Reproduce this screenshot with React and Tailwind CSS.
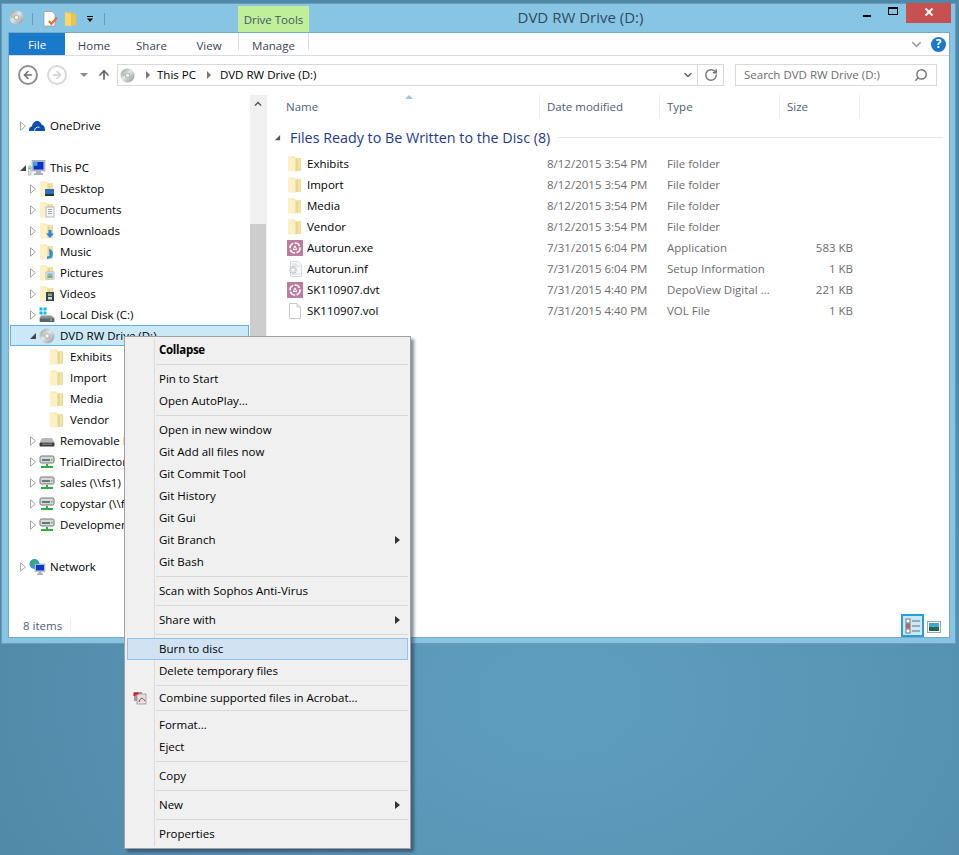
import { ChevronDown, Search, RotateCw, ArrowUp, ArrowLeft, ArrowRight } from 'lucide-react';

const TREE = [
	{ label: 'OneDrive', level: 0, icon: 'cloud', exp: 'closed' },
	{ blank: true },
	{ label: 'This PC', level: 0, icon: 'pc', exp: 'open' },
	{ label: 'Desktop', level: 1, icon: 'fDesktop', exp: 'closed' },
	{ label: 'Documents', level: 1, icon: 'fDocs', exp: 'closed' },
	{ label: 'Downloads', level: 1, icon: 'fDown', exp: 'closed' },
	{ label: 'Music', level: 1, icon: 'fMusic', exp: 'closed' },
	{ label: 'Pictures', level: 1, icon: 'fPics', exp: 'closed' },
	{ label: 'Videos', level: 1, icon: 'fVideo', exp: 'closed' },
	{ label: 'Local Disk (C:)', level: 1, icon: 'disk', exp: 'closed' },
	{ label: 'DVD RW Drive (D:)', level: 1, icon: 'disc', exp: 'open', selected: true },
	{ label: 'Exhibits', level: 2, icon: 'folder' },
	{ label: 'Import', level: 2, icon: 'folder' },
	{ label: 'Media', level: 2, icon: 'folder' },
	{ label: 'Vendor', level: 2, icon: 'folder' },
	{ label: 'Removable Disk (E:)', level: 1, icon: 'usb', exp: 'closed' },
	{ label: 'TrialDirector (\\\\fs1)', level: 1, icon: 'net', exp: 'closed' },
	{ label: 'sales (\\\\fs1)', level: 1, icon: 'net', exp: 'closed' },
	{ label: 'copystar (\\\\fs1)', level: 1, icon: 'net', exp: 'closed' },
	{ label: 'Development (\\\\fs1)', level: 1, icon: 'net', exp: 'closed' },
	{ blank: true },
	{ label: 'Network', level: 0, icon: 'globe', exp: 'closed' }
];

const FILES = [
	{ name: 'Exhibits', date: '8/12/2015 3:54 PM', type: 'File folder', size: '', icon: 'folder' },
	{ name: 'Import', date: '8/12/2015 3:54 PM', type: 'File folder', size: '', icon: 'folder' },
	{ name: 'Media', date: '8/12/2015 3:54 PM', type: 'File folder', size: '', icon: 'folder' },
	{ name: 'Vendor', date: '8/12/2015 3:54 PM', type: 'File folder', size: '', icon: 'folder' },
	{ name: 'Autorun.exe', date: '7/31/2015 6:04 PM', type: 'Application', size: '583 KB', icon: 'depo' },
	{ name: 'Autorun.inf', date: '7/31/2015 6:04 PM', type: 'Setup Information', size: '1 KB', icon: 'inf' },
	{ name: 'SK110907.dvt', date: '7/31/2015 4:40 PM', type: 'DepoView Digital ...', size: '221 KB', icon: 'depo' },
	{ name: 'SK110907.vol', date: '7/31/2015 4:40 PM', type: 'VOL File', size: '1 KB', icon: 'blank' }
];

const MENU = [
	{ label: 'Collapse', bold: true }, 'sep',
	{ label: 'Pin to Start' }, { label: 'Open AutoPlay...' }, 'sep',
	{ label: 'Open in new window' }, { label: 'Git Add all files now' }, { label: 'Git Commit Tool' }, { label: 'Git History' }, { label: 'Git Gui' }, { label: 'Git Branch', sub: true }, { label: 'Git Bash' }, 'sep',
	{ label: 'Scan with Sophos Anti-Virus' }, 'sep',
	{ label: 'Share with', sub: true }, 'sep',
	{ label: 'Burn to disc', active: true }, { label: 'Delete temporary files' }, 'short',
	{ label: 'Combine supported files in Acrobat...', acrobat: true, tight: true }, 'sep',
	{ label: 'Format...' }, { label: 'Eject' }, 'sep',
	{ label: 'Copy' }, 'sep',
	{ label: 'New', sub: true }, 'sep',
	{ label: 'Properties' }
];

const Disc = ({ className = 'w-4 h-4' }) => (
	<svg viewBox="0 0 16 16" className={ className }>
		<defs>
			<linearGradient id="discFill" x1="0" y1="0" x2="1" y2="1">
				<stop offset="0" stopColor="#8f9698" />
				<stop offset="0.45" stopColor="#e4e6e6" />
				<stop offset="1" stopColor="#8a8f92" />
			</linearGradient>
		</defs>
		<circle cx="8" cy="8" r="7.5" fill="url(#discFill)" />
		<path d="M2 5 L6 7 L5 9 L2 8Z" fill="#9fd08f" opacity="0.7" />
		<circle cx="8" cy="8" r="2.4" fill="#f4f4f4" stroke="#8b8f92" strokeWidth="0.7" />
	</svg>
);

const Folder = ({ children }) => (
	<svg viewBox="0 0 16 16" className="w-4 h-4 shrink-0">
		<path d="M1 0.5 H7 L9 2 H14 V15 H1Z" fill="#f6e6a6" />
		<path d="M1 0.5 L8.5 2.5 V15.5 H1Z" fill="#fcf1c4" />
		<path d="M8.5 2.5 L11 3.5 V14.5 L8.5 15.5Z" fill="#e6d59c" />
		<rect x="12.6" y="2" width="1.4" height="13" fill="#f1dc92" />
		{ children }
	</svg>
);

const DepoIcon = () => (
	<svg viewBox="0 0 16 16" className="w-4 h-4 shrink-0">
		<rect width="16" height="16" fill="#bd7b9d" />
		<circle cx="8" cy="8" r="5" fill="none" stroke="#fff" strokeWidth="1.6" strokeDasharray="6 1.5" />
		<path d="M6.3 9.6 L8 5.8 L9.7 9.6Z" fill="none" stroke="#fff" strokeWidth="1" />
	</svg>
);

const NetDrive = () => (
	<svg viewBox="0 0 16 16" className="w-4 h-4 shrink-0">
		<rect x="1" y="2" width="14" height="7" rx="1.5" fill="#d6d8d8" stroke="#70767a" />
		<rect x="3" y="5" width="8" height="2" fill="#6f7478" />
		<rect x="12" y="5" width="1.5" height="1.5" fill="#58c058" />
		<path d="M7 10 H9 V12 H14 V14 H2 V12 H7Z" fill="#2fae3c" />
	</svg>
);

const icons = {
	folder: <Folder />,
	fDesktop: <Folder><rect x="6" y="8" width="9" height="6" fill="#2a6fbd" /><rect x="6" y="13" width="9" height="2" fill="#26323c" /></Folder>,
	fDocs: <Folder><rect x="7" y="5" width="8" height="10" fill="#f4f6f8" stroke="#9aa4ae" strokeWidth="0.7" /><path d="M9 7.5 H13 M9 9.5 H13 M9 11.5 H13" stroke="#8a97a6" strokeWidth="0.8" /></Folder>,
	fDown: <Folder><path d="M9.5 7 H12.5 V10.5 H15 L11 15 L7 10.5 H9.5Z" fill="#2b86d8" /></Folder>,
	fMusic: <Folder><path d="M10 4.5 C14 6 15 10 12.5 14 L8 15 V12.5 L10.5 12Z" fill="#2f8fdc" /></Folder>,
	fPics: <Folder><rect x="7" y="7" width="8" height="7" fill="#eef2f4" stroke="#a0a8ae" strokeWidth="0.7" /><rect x="8.3" y="8.3" width="5.4" height="2.6" fill="#79b7d6" /><rect x="8.3" y="10.9" width="5.4" height="2" fill="#7aa66a" /></Folder>,
	fVideo: <Folder><rect x="7" y="6" width="8" height="9" fill="#3b4148" /><rect x="9" y="7.5" width="4" height="2.5" fill="#7cb36a" /><rect x="9" y="11" width="4" height="2.5" fill="#d7e0e6" /></Folder>,
	disk: (
		<svg viewBox="0 0 16 16" className="w-4 h-4 shrink-0">
			<rect x="0.5" y="0.5" width="3" height="3" fill="#17b5ef" /><rect x="4.5" y="0.5" width="3" height="3" fill="#17b5ef" />
			<rect x="0.5" y="4.5" width="3" height="3" fill="#17b5ef" /><rect x="4.5" y="4.5" width="3" height="3" fill="#17b5ef" />
			<path d="M2 8.5 H12 L15.5 11 V15 H0.5 V11Z" fill="#8b9399" />
			<rect x="1" y="11.5" width="14" height="3.5" rx="0.5" fill="#5e666c" />
			<rect x="11" y="12.5" width="2" height="1" fill="#9be05c" />
		</svg>
	),
	disc: <Disc className="w-4 h-4 shrink-0" />,
	usb: (
		<svg viewBox="0 0 16 16" className="w-4 h-4 shrink-0">
			<path d="M3 5 H13 L15.5 9.5 H0.5Z" fill="#b9b9b9" />
			<rect x="0.5" y="9.5" width="15" height="4" rx="1" fill="#3c3c3c" />
			<rect x="3" y="10.5" width="10" height="1.5" fill="#777" />
		</svg>
	),
	net: <NetDrive />,
	cloud: (
		<svg viewBox="0 0 16 16" className="w-4 h-4 shrink-0">
			<path d="M0 13 C-0.3 10.5 1 8.8 2.8 8.6 C3.4 5 5.8 3 8.2 3 C10.4 3 11.8 4.4 12.4 6.4 C14.8 6.6 16.2 9 16 13Z" fill="#0a4eb0" />
			<path d="M5.5 13 C5.5 10.2 7.5 8.6 10.5 9.2" stroke="#fff" strokeWidth="0.9" fill="none" />
		</svg>
	),
	pc: (
		<svg viewBox="0 0 16 16" className="w-4 h-4 shrink-0 overflow-visible">
			<rect x="-0.5" y="6" width="2.5" height="9" fill="#dfe5e8" stroke="#8d979d" strokeWidth="0.5" />
			<rect x="0" y="7.5" width="1.5" height="1.5" fill="#62c24c" />
			<rect x="3" y="0.5" width="13" height="10.5" fill="#c6ced4" stroke="#8a949a" strokeWidth="0.6" />
			<rect x="4.5" y="1.8" width="10" height="7.8" fill="#0d2fc4" />
			<rect x="4.5" y="1.8" width="4" height="4" fill="#3fa0ee" />
			<path d="M7 11 H12 V13 H14 V15 H5 V13 H7Z" fill="#a9b3b9" />
		</svg>
	),
	globe: (
		<svg viewBox="0 0 16 16" className="w-4 h-4 shrink-0 overflow-visible">
			<circle cx="5.5" cy="5" r="5" fill="#2e9ae0" />
			<path d="M1.5 3 L5 1 L7.5 3 L5 6 L2.5 5.5Z M6 7 L9 6.5 L8 9.5 L6 9.5Z" fill="#3fb14a" />
			<rect x="6" y="5" width="10" height="7.5" fill="#c6ced4" stroke="#8a949a" strokeWidth="0.5" />
			<rect x="7" y="6" width="8" height="5.5" fill="#1038c8" />
			<path d="M9.5 12.5 H12.5 V14.5 H14 V16 H8 V14.5 H9.5Z" fill="#a9b3b9" />
		</svg>
	),
	depo: <DepoIcon />,
	inf: (
		<svg viewBox="0 0 16 16" className="w-4 h-4 shrink-0">
			<path d="M3.5 0.5 H11 L14.5 4 V15.5 H3.5Z" fill="#fafafa" stroke="#d4d8dc" />
			<path d="M5 3 H10 M5 5 H13 M5 13 H13" stroke="#c4ced8" strokeWidth="0.8" />
			<circle cx="6" cy="9" r="3.2" fill="#e6e9eb" stroke="#b4bac0" strokeWidth="1.4" strokeDasharray="1.3 0.9" />
			<circle cx="6" cy="9" r="1" fill="#fff" />
		</svg>
	),
	blank: (
		<svg viewBox="0 0 16 16" className="w-4 h-4 shrink-0">
			<path d="M2.5 0.5 H10 L13.5 4 V15.5 H2.5Z" fill="#fff" stroke="#c8c8c8" />
			<path d="M10 0.5 V4 H13.5" fill="#f0f0f0" stroke="#c8c8c8" />
		</svg>
	)
};

const Expander = ({ state }) => {
	if (state === 'closed') return (
		<svg viewBox="0 0 8 10" className="w-2 h-2.5">
			<path d="M1.5 0.8 L6.5 5 L1.5 9.2Z" fill="#fff" stroke="#a6a6a6" />
		</svg>
	);
	if (state === 'open') return (
		<svg viewBox="0 0 8 8" className="w-2 h-2">
			<path d="M7 1 V7 H1Z" fill="#454545" />
		</svg>
	);
	return null;
};

const TreeRow = ({ row }) => {
	if (row.blank) return <div className="h-[21px]" />;

	const indent = { 0: 'pl-[9px]', 1: 'pl-[19px]', 2: 'pl-[29px]' }[row.level];

	return (
		<div className={ `flex items-center h-[21px] whitespace-nowrap text-black ${ row.selected ? 'mx-px pl-[17px] border border-[#5fb2e6] bg-[#cbe8f6]' : indent }` }>
			<span className="flex items-center justify-center w-2.5 h-full shrink-0">
				<Expander state={ row.exp } />
			</span>
			<span className="ml-px flex items-center">{ icons[row.icon] }</span>
			<span className="ml-[5px]">{ row.label }</span>
		</div>
	);
};

const ColHead = ({ width, children }) => (
	<div className={ `flex items-center h-full border-r border-[#e3eef7] pl-[7px] shrink-0 ${ width }` }>{ children }</div>
);

const FileRow = ({ file }) => (
	<div className="flex items-center h-[21px] whitespace-nowrap">
		<div className="flex items-center w-[273px] pl-[20px] shrink-0 text-black">
			{ icons[file.icon] }
			<span className="ml-[4px]">{ file.name }</span>
		</div>
		<div className="w-[120px] pl-[7px] shrink-0 text-[#6d6d6d]">{ file.date }</div>
		<div className="w-[120px] pl-[7px] shrink-0 text-[#6d6d6d]">{ file.type }</div>
		<div className="w-[73px] shrink-0 text-right text-[#6d6d6d]">{ file.size }</div>
	</div>
);

const MenuItem = ({ item }) => {
	if (item === 'sep') return <div className="flex items-center h-[7px] pl-[29px]"><div className="h-px w-full bg-[#d7d7d7]" /></div>;
	if (item === 'short') return <div className="flex items-center h-[6px] pl-[29px]"><div className="h-px w-full bg-[#d7d7d7]" /></div>;

	return (
		<div className={ `relative flex items-center ${ item.tight ? 'h-[19px]' : 'h-[22px]' } ${ item.bold ? 'font-bold tracking-[-0.3px]' : '' } ${ item.active ? 'pl-[31px] border border-[#95bfe8] bg-[#d1e2f2]' : 'pl-[32px]' }` }>
			{
				item.acrobat ?
					<svg viewBox="0 0 14 14" className="absolute left-[6px] top-[3px] w-3.5 h-3.5">
						<rect x="1" y="1" width="8" height="9" fill="#9c9c9c" />
						<rect x="4" y="3" width="9" height="10" fill="#e2e2e2" stroke="#8a8a8a" strokeWidth="0.7" />
						<path d="M0.5 1.5 H5.5 V3.5 H2.5 V5 H0.5Z" fill="#e0101a" />
						<path d="M6 11 C8 6 9 6 12 10" stroke="#e0101a" strokeWidth="1" fill="none" />
					</svg>
				:
					null
			}
			<span>{ item.label }</span>
			{
				item.sub ?
					<svg viewBox="0 0 5 8" className="absolute right-[8px] top-[7px] w-[5px] h-2"><path d="M0 0 L5 4 L0 8Z" fill="#333" /></svg>
				:
					null
			}
		</div>
	);
};

const App = () => {
	return (
		<div className="relative w-[959px] h-[855px] overflow-hidden pt-[3px] pl-px text-[11.5px] font-['Open_Sans','Noto_Sans',sans-serif] bg-[radial-gradient(ellipse_620px_420px_at_560px_700px,#5f9dbf_0%,#5a96b6_45%,#4f89a8_100%)]">

			<div className="flex flex-col w-[955px] h-[641px] border border-[#6b99b6] bg-[#88c5e4]">

				<header className="flex h-[29px] shrink-0">
					<div className="flex items-center h-full pl-[7px] gap-0 shrink-0">
						<Disc className="w-[15px] h-[15px] -mt-[2px]" />
						<span className="ml-[8px] w-px h-3 bg-[#6a9bb8]" />
						<svg viewBox="0 0 16 16" className="ml-[9px] w-4 h-4">
							<path d="M2 0.5 H10 L13 3.5 V15 H2Z" fill="#fff" stroke="#9a9a9a" strokeWidth="0.7" />
							<path d="M7 10 L9.5 13 L15 6.5" stroke="#ee6a2a" strokeWidth="2" fill="none" />
						</svg>
						<svg viewBox="0 0 14 16" className="ml-[6px] w-[13px] h-4">
							<path d="M1 0.5 H7 L8 2 H13 V15 H1Z" fill="#eec14f" />
							<path d="M1 1 L7.5 2.5 V15.5 L1 15Z" fill="#f9d76d" />
						</svg>
						<svg viewBox="0 0 8 8" className="ml-[9px] w-2 h-2"><rect x="1" y="1" width="6" height="1" fill="#000" /><path d="M1 3.5 H7 L4 7Z" fill="#000" /></svg>
						<span className="ml-[10px] w-px h-3 bg-[#6a9bb8]" />
						<div className="flex items-center justify-center self-end ml-[133px] w-[71px] h-[27px] text-[#3f5866] bg-[#c1ee9a]">Drive Tools</div>
					</div>
					<div className="flex-1 flex items-center justify-center pr-px pb-[2px] text-[15px] text-[#2e4a5e] whitespace-nowrap">DVD RW Drive (D:)</div>
					<div className="flex h-[20px] mt-[-1px] pr-[4px] shrink-0">
						<div className="flex items-center justify-center w-[27px]"><span className="block w-[8px] h-[2px] mt-[6px] bg-black" /></div>
						<div className="flex items-center justify-center w-[26px]"><span className="block w-[10px] h-[8px] border border-black border-t-2 -mt-[5px]" /></div>
						<div className="flex items-center justify-center w-[45px] bg-[#c75050]">
							<svg viewBox="0 0 10 10" className="w-2.5 h-2.5 -mt-[2px]"><path d="M1.5 1.5 L8.5 8.5 M8.5 1.5 L1.5 8.5" stroke="#fff" strokeWidth="1.8" /></svg>
						</div>
					</div>
				</header>

				<div className="flex flex-col flex-1 min-h-0 ml-[7px] mr-[6px] mb-[6px] bg-white outline outline-1 outline-[#78a8c4]">

					<nav className="flex items-center h-[23px] shrink-0 border-b border-[#dadbdc] text-[#3c3f55]">
						<div className="flex items-center justify-center w-[56px] h-full pt-px text-white bg-[#1979ca]">File</div>
						<div className="flex items-center justify-center w-[58px] h-full pt-[3px]">Home</div>
						<div className="flex items-center justify-center w-[57px] h-full pt-[3px]">Share</div>
						<div className="flex items-center justify-center w-[58px] h-full pt-[3px]">View</div>
						<div className="relative flex items-center justify-center w-[71px] h-full pt-[3px]">
							Manage
							<span className="absolute left-0 top-0 w-px h-[17px] bg-[#dadbdc]" />
							<span className="absolute right-0 top-0 w-px h-[17px] bg-[#dadbdc]" />
						</div>
						<div className="flex-1" />
						<ChevronDown className="w-[15px] h-[15px] mr-[7px] text-[#a0a0a0]" strokeWidth={ 2.5 } />
						<div className="flex items-center justify-center w-[15px] h-[15px] mr-[3px] rounded-full text-[12px] font-bold text-white bg-[#1a78c8]">?</div>
					</nav>

					<div className="flex items-center h-[38px] mb-px shrink-0">
						<div className="flex items-center justify-center ml-[9px] w-[20px] h-[20px] rounded-full border-2 border-[#8f8f8f]">
							<ArrowLeft className="w-3 h-3 text-[#6d6d6d]" strokeWidth={ 3 } />
						</div>
						<div className="flex items-center justify-center ml-[9px] w-[20px] h-[20px] rounded-full border-2 border-[#d8d8d8]">
							<ArrowRight className="w-3 h-3 text-[#d0d0d0]" strokeWidth={ 3 } />
						</div>
						<svg viewBox="0 0 8 4" className="ml-[13px] w-2 h-1"><path d="M0 0 H8 L4 4Z" fill="#8a8a8a" /></svg>
						<ArrowUp className="ml-[9px] w-[14px] h-[14px] text-[#6d6d6d]" strokeWidth={ 3 } />
						<div className="flex items-center ml-[6px] w-[607px] h-[22px] border border-[#d9d9d9] text-black whitespace-nowrap">
							<Disc className="ml-[2px] w-[15px] h-[15px]" />
							<svg viewBox="0 0 4 8" className="ml-[11px] w-1 h-2"><path d="M0 0 L4 4 L0 8Z" fill="#777" /></svg>
							<span className="ml-[7px]">This PC</span>
							<svg viewBox="0 0 4 8" className="ml-[11px] w-1 h-2"><path d="M0 0 L4 4 L0 8Z" fill="#777" /></svg>
							<span className="ml-[9px]">DVD RW Drive (D:)</span>
							<div className="flex-1" />
							<ChevronDown className="w-3 h-3 mr-[3px] text-[#666]" strokeWidth={ 3 } />
							<div className="flex items-center justify-center w-[26px] h-full border-l border-[#d9d9d9]">
								<RotateCw className="w-[14px] h-[14px] text-[#777]" strokeWidth={ 2.5 } />
							</div>
						</div>
						<div className="flex items-center ml-[11px] w-[202px] h-[22px] px-2 border border-[#d9d9d9] text-[#6d6d6d] whitespace-nowrap">
							<span className="flex-1">Search DVD RW Drive (D:)</span>
							<Search className="w-3.5 h-3.5 -scale-x-100 text-[#777]" strokeWidth={ 2.5 } />
						</div>
					</div>

					<div className="flex flex-1 min-h-0">
						<aside className="w-[241px] shrink-0 pt-[20px] overflow-hidden">
							{ TREE.map((row, ind) => <TreeRow key={ ind } row={ row } />) }
						</aside>

						<div className="flex flex-col w-4 shrink-0 bg-[#f0f0f0]">
							<div className="flex items-center justify-center h-4">
								<svg viewBox="0 0 8 5" className="w-2 h-[5px]"><path d="M1 4.5 L4 1.5 L7 4.5" stroke="#555" strokeWidth="1.5" fill="none" /></svg>
							</div>
							<div className="mt-[113px] h-[300px] bg-[#cdcdcd]" />
						</div>

						<main className="flex-1 min-w-0 border-l border-[#eeeeee]">
							<div className="relative flex h-[23px] text-[#4c607a]">
								<svg viewBox="0 0 8 4" className="absolute left-[138px] top-0 w-2 h-1"><path d="M0 4 L4 0 L8 4Z" fill="#9cc6e6" /></svg>
								<ColHead width="w-[273px] pl-[19px]">Name</ColHead>
								<ColHead width="w-[120px]">Date modified</ColHead>
								<ColHead width="w-[120px]">Type</ColHead>
								<ColHead width="w-[80px]">Size</ColHead>
							</div>
							<div className="flex items-center h-[21px] mt-[9px] pl-[7px] pr-[6px] mb-[5px]">
								<svg viewBox="0 0 8 8" className="w-[7px] h-[7px]"><path d="M7 1 V7 H1Z" fill="#555" /></svg>
								<span className="ml-[9px] text-[14.3px] text-[#1e3a8f] whitespace-nowrap">Files Ready to Be Written to the Disc (8)</span>
								<div className="flex-1 ml-[8px] h-px bg-[#e6e6e6]" />
							</div>
							{ FILES.map(file => <FileRow key={ file.name } file={ file } />) }
						</main>
					</div>

					<footer className="flex items-end h-[23px] shrink-0 text-[#4c607a]">
						<div className="self-center pl-[14px] w-[62px] border-r border-[#eeeeee]">8 items</div>
						<div className="flex-1" />
						<div className="flex items-center justify-center w-[23px] h-[23px] border-2 border-[#26a0da] bg-[#cbe8f6]">
							<svg viewBox="0 0 16 16" className="w-4 h-4">
								<rect x="1" y="1" width="4" height="4" fill="#fff" stroke="#777" />
								<rect x="1" y="6" width="4" height="4" fill="#d8575b" stroke="#777" />
								<rect x="1" y="11" width="4" height="4" fill="#fff" stroke="#777" />
								<path d="M7 3 H15 M7 8 H15 M7 13 H15" stroke="#5f6f7f" strokeWidth="1.2" />
							</svg>
						</div>
						<svg viewBox="0 0 14 12" className="self-center mt-[2px] ml-[3px] mr-[8px] w-[14px] h-3">
							<rect x="0.5" y="0.5" width="13" height="11" fill="#fff" stroke="#9aa6b0" />
							<rect x="2" y="2" width="10" height="4" fill="#4aa3d6" />
							<rect x="2" y="6" width="10" height="4" fill="#1f6a4a" />
						</svg>
					</footer>
				</div>
			</div>

			<div className="absolute left-[124px] top-[336px] w-[287px] pt-[2px] pb-[3px] px-[2px] border border-[#a0a0a0] text-black bg-[#f0f0f0] shadow-[3px_3px_3px_rgba(30,50,70,0.55)]">
				<div className="absolute left-[29px] top-[2px] bottom-[2px] w-px bg-[#dcdcdc]" />
				<div className="relative">
					{ MENU.map((item, ind) => <MenuItem key={ ind } item={ item } />) }
				</div>
			</div>

		</div>
	);
};

export default App;
